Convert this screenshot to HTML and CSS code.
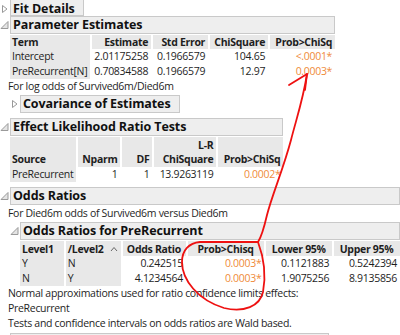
FILE: index.html
```html
<!DOCTYPE html>
<html lang="en">
<head>
    <meta charset="UTF-8">
    <title>Fit Details</title>
    <link rel="stylesheet" href="styles.css">
</head>
<body>
    <div class="report">
        <div class="node cut">
            <span class="tri"><svg width="10" height="10"><path d="M2.5 1.5 L7 5 L2.5 8.5 Z" fill="#fff" stroke="#999"/></svg></span>
            <div class="ob-head">Fit Details</div>
        </div>

        <div class="node">
            <span class="tri"><svg width="10" height="10"><path d="M8 1.5 L8 8.5 L1 8.5 Z" fill="#e4e4e4" stroke="#9a9a9a"/></svg></span>
            <div class="ob-head">Parameter Estimates</div>
            <div class="ob-body">
                <table class="rt pe">
                    <tr class="hd">
                        <th class="lab">Term</th>
                        <th>Estimate</th>
                        <th>Std Error</th>
                        <th>ChiSquare</th>
                        <th>Prob&gt;ChiSq</th>
                    </tr>
                    <tr>
                        <td class="lab">Intercept</td>
                        <td>2.01175258</td>
                        <td>0.1966579</td>
                        <td>104.65</td>
                        <td class="sig">&lt;.0001*</td>
                    </tr>
                    <tr>
                        <td class="lab">PreRecurrent[N]</td>
                        <td>0.70834588</td>
                        <td>0.1966579</td>
                        <td>12.97</td>
                        <td class="sig">0.0003*</td>
                    </tr>
                </table>
                <div class="note">For log odds of Survived6m/Died6m</div>
                <div class="node">
                    <span class="tri"><svg width="10" height="10"><path d="M2.5 1.5 L7 5 L2.5 8.5 Z" fill="#fff" stroke="#999"/></svg></span>
                    <div class="ob-head">Covariance of Estimates</div>
                </div>
            </div>
        </div>

        <div class="node gap">
            <span class="tri"><svg width="10" height="10"><path d="M8 1.5 L8 8.5 L1 8.5 Z" fill="#e4e4e4" stroke="#9a9a9a"/></svg></span>
            <div class="ob-head">Effect Likelihood Ratio Tests</div>
            <div class="ob-body">
                <table class="rt lr">
                    <tr class="hd tall">
                        <th class="lab">Source</th>
                        <th>Nparm</th>
                        <th>DF</th>
                        <th>L-R<br>ChiSquare</th>
                        <th>Prob&gt;ChiSq</th>
                    </tr>
                    <tr>
                        <td class="lab">PreRecurrent</td>
                        <td>1</td>
                        <td>1</td>
                        <td>13.9263119</td>
                        <td class="sig">0.0002*</td>
                    </tr>
                </table>
            </div>
        </div>

        <div class="node gap">
            <span class="tri"><svg width="10" height="10"><path d="M8 1.5 L8 8.5 L1 8.5 Z" fill="#e4e4e4" stroke="#9a9a9a"/></svg></span>
            <div class="ob-head">Odds Ratios</div>
            <div class="ob-body">
                <div class="note">For Died6m odds of Survived6m versus Died6m</div>
                <div class="node">
                    <span class="tri"><svg width="10" height="10"><path d="M8 1.5 L8 8.5 L1 8.5 Z" fill="#e4e4e4" stroke="#9a9a9a"/></svg></span>
                    <div class="ob-head">Odds Ratios for PreRecurrent</div>
                    <div class="ob-body">
                        <table class="rt or">
                            <tr class="hd">
                                <th class="lab">Level1</th>
                                <th class="lab sort">/Level2 <svg width="8" height="6"><path d="M1 5 L4 1.5 L7 5" fill="none" stroke="#666"/></svg></th>
                                <th>Odds Ratio</th>
                                <th>Prob&gt;Chisq</th>
                                <th>Lower 95%</th>
                                <th>Upper 95%</th>
                            </tr>
                            <tr>
                                <td class="lab">Y</td>
                                <td class="lab">N</td>
                                <td>0.242515</td>
                                <td class="sig">0.0003*</td>
                                <td>0.1121883</td>
                                <td>0.5242394</td>
                            </tr>
                            <tr>
                                <td class="lab">N</td>
                                <td class="lab">Y</td>
                                <td>4.1234564</td>
                                <td class="sig">0.0003*</td>
                                <td>1.9075256</td>
                                <td>8.9135856</td>
                            </tr>
                        </table>
                    </div>
                </div>
                <div class="note">Normal approximations used for ratio confidence limits effects:</div>
                <div class="note">PreRecurrent</div>
                <div class="note">Tests and confidence intervals on odds ratios are Wald based.</div>
            </div>
        </div>

        <div class="node stub-node">
            <span class="tri"></span>
            <div class="ob-head stub"></div>
        </div>
    </div>

    <svg class="ink" width="400" height="335" viewBox="0 0 400 335">
        <path d="M307 74 C303 100 296 120 291 140 C283 170 272 195 267 215 C264 228 262 236 258 242"/>
        <path d="M289 85 L307 74 L305 90"/>
        <path d="M258 242 L200 242 C189 243 182 250 182 262 C182 280 198 300 224 308 C244 313 260 306 263 292 C266 276 264 258 258 242"/>
    </svg>
</body>
</html>
```

FILE: styles.css
```css
* {
    margin: 0;
    padding: 0;
    box-sizing: border-box;
}

body {
    position: relative;
    width: 400px;
    height: 335px;
    overflow: hidden;
    background-color: #fff;
    font-family: 'Open Sans', 'Noto Sans', sans-serif;
    font-size: 10.5px;
    letter-spacing: -0.3px;
    color: #1e1e1e;
}

.report {
    display: flex;
    flex-direction: column;
    align-items: flex-start;
}

/* outline node: triangle column + header/body */
.node {
    display: grid;
    grid-template-columns: 10px auto;
    width: fit-content;
    margin-top: 2px;
}

.node.cut {
    margin-top: 0;
}

.node.cut + .node {
    margin-top: 0;
}

.node.cut .tri,
.node.cut .ob-head {
    height: 16px;
    padding-top: 1px;
    line-height: 16px;
    border-top: none;
}

.node.gap {
    margin-top: 5px;
}

.tri {
    grid-column: 1;
    grid-row: 1;
    display: flex;
    align-items: center;
    justify-content: center;
    height: 18px;
}

.tri svg {
    display: block;
}

.ob-head {
    grid-column: 2;
    grid-row: 1;
    height: 18px;
    line-height: 16px;
    padding: 0 8px 0 2px;
    background-color: #eeeeee;
    border: 1px solid #c9c9c9;
    font-size: 12.5px;
    font-weight: 700;
    letter-spacing: -0.1px;
    color: #111;
    white-space: nowrap;
}

.stub-node .tri,
.ob-head.stub {
    width: 319px;
    height: 3px;
    border-bottom: none;
}

.stub-node .tri {
    width: auto;
}

.ob-body {
    grid-column: 2;
    grid-row: 2;
    padding-top: 1px;
}

.ob-body > .node {
    margin-top: 1px;
}

.note {
    height: 15px;
    line-height: 15px;
    margin-left: -2px;
    white-space: nowrap;
}

/* report tables */
.rt {
    border-collapse: collapse;
}

.rt th,
.rt td {
    text-align: right;
    padding: 0 3px 0 2px;
    white-space: nowrap;
    border-left: 2px solid #fff;
}

.rt th:first-child,
.rt td:first-child {
    border-left: none;
}

.rt th {
    height: 14px;
    line-height: 14px;
    font-weight: 700;
    background-color: #e8e8e8;
    vertical-align: bottom;
}

.rt td {
    height: 15px;
    line-height: 15px;
}

.rt .lab {
    text-align: left;
    background-color: #e8e8e8;
}

.rt .hd.tall th {
    height: 30px;
    padding-bottom: 1px;
}

.rt td.sig {
    color: #ef8b3a;
}

.pe th:nth-child(1) { width: 77px; }
.pe th:nth-child(2) { width: 59px; }
.pe th:nth-child(3) { width: 57px; }
.pe th:nth-child(4) { width: 60px; }
.pe th:nth-child(5) { width: 66px; }

.lr th:nth-child(1) { width: 62px; }
.lr th:nth-child(2) { width: 44px; }
.lr th:nth-child(3) { width: 32px; }
.lr th:nth-child(4) { width: 64px; }
.lr th:nth-child(5) { width: 66px; }

.or th { text-align: center; height: 15px; }
.or th:nth-child(1) { width: 45px; }
.or th:nth-child(2) { width: 53px; }
.or th:nth-child(3) { width: 65px; }
.or th:nth-child(4) { width: 79px; }
.or th:nth-child(5) { width: 68px; }
.or th:nth-child(6) { width: 67px; }

.or th.lab { text-align: left; }

.or th.sort svg {
    margin-left: 4px;
    vertical-align: 1px;
}

/* red hand-drawn annotation on top */
.ink {
    position: absolute;
    left: 0;
    top: 0;
    pointer-events: none;
}

.ink path {
    fill: none;
    stroke: #ee1111;
    stroke-width: 1.8;
    stroke-linecap: round;
    stroke-linejoin: round;
}
```
